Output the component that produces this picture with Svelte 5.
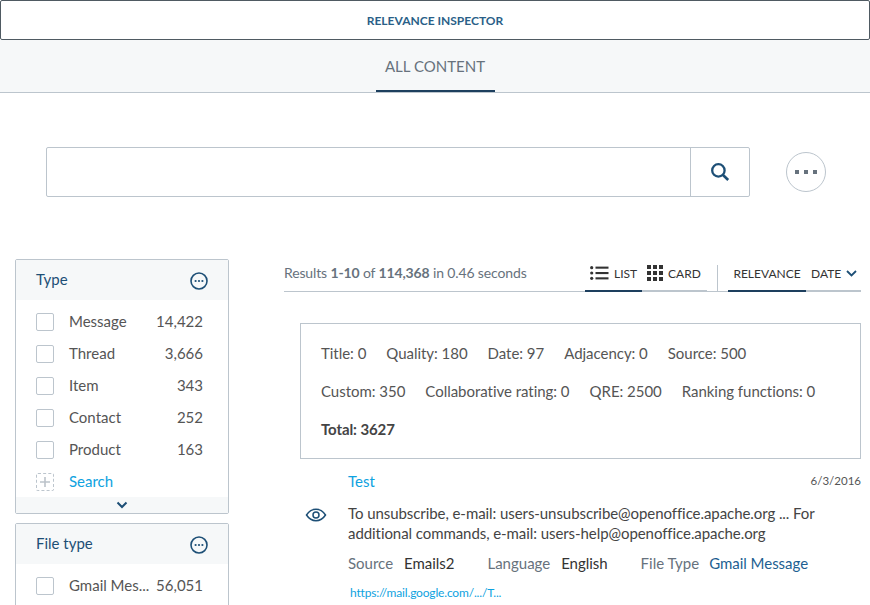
<script>
  const rows = [
    ['Message', '14,422'],
    ['Thread', '3,666'],
    ['Item', '343'],
    ['Contact', '252'],
    ['Product', '163']
  ];
</script>

<svelte:head><title>Relevance Inspector</title></svelte:head>

{#snippet more()}
  <svg class="more" width="18" height="18" viewBox="0 0 18 18" fill="none">
    <circle cx="9" cy="9" r="8" stroke="#1d4f76" stroke-width="1.6" />
    <circle cx="5.6" cy="9" r="1.1" fill="#1d4f76" />
    <circle cx="9" cy="9" r="1.1" fill="#1d4f76" />
    <circle cx="12.4" cy="9" r="1.1" fill="#1d4f76" />
  </svg>
{/snippet}

<div class="page">
  <button class="inspector">RELEVANCE INSPECTOR</button>
  <nav class="tabs"><span class="tab">ALL CONTENT</span></nav>

  <div class="searchrow">
    <div class="searchbox">
      <div class="input"></div>
      <div class="searchbtn">
        <svg width="20" height="20" viewBox="0 0 20 20" fill="none" stroke="#1d4f76">
          <circle cx="8.4" cy="8.4" r="6.2" stroke-width="2.3" />
          <path d="M13 13l5.2 5" stroke-width="2.6" />
        </svg>
      </div>
    </div>
    <div class="circle"><i></i><i></i><i></i></div>
  </div>

  <div class="main">
    <aside>
      <section class="facet first">
        <header><span>Type</span>{@render more()}</header>
        <div class="list">
          {#each rows as [label, count]}
            <div class="row"><span class="box"></span><span class="label">{label}</span><span class="count">{count}</span></div>
          {/each}
          <div class="row">
            <span class="box dashed">
              <svg width="12" height="12" viewBox="0 0 12 12"><path d="M6 1v10M1 6h10" stroke="#bcc3ca" stroke-width="1.6" /></svg>
            </span>
            <span class="label link">Search</span>
          </div>
        </div>
        <div class="expand">
          <svg width="12" height="8" viewBox="0 0 12 8" fill="none"><path d="M1.5 1.5L6 6l4.5-4.5" stroke="#1d4f76" stroke-width="2" /></svg>
        </div>
      </section>
      <section class="facet second">
        <header><span>File type</span>{@render more()}</header>
        <div class="list">
          <div class="row"><span class="box"></span><span class="label">Gmail Mes...</span><span class="count">56,051</span></div>
        </div>
      </section>
    </aside>

    <div class="results">
      <div class="bar">
        <div class="summary">Results <b>1-10</b> of <b>114,368</b> in 0.46 seconds</div>
        <div class="views">
          <div class="vt active">
            <svg width="19" height="14" viewBox="0 0 19 14" fill="#333">
              <circle cx="1.7" cy="1.7" r="1.6" /><circle cx="1.7" cy="7" r="1.6" /><circle cx="1.7" cy="12.3" r="1.6" />
              <rect x="5.5" y="0.6" width="13" height="2.1" /><rect x="5.5" y="6" width="13" height="2.1" /><rect x="5.5" y="11.3" width="13" height="2.1" />
            </svg>
            <span>LIST</span>
          </div>
          <div class="vt">
            <svg width="16" height="16" viewBox="0 0 16 16" fill="#333">
              <rect width="4" height="4" /><rect x="6" width="4" height="4" /><rect x="12" width="4" height="4" />
              <rect y="6" width="4" height="4" /><rect x="6" y="6" width="4" height="4" /><rect x="12" y="6" width="4" height="4" />
              <rect y="12" width="4" height="4" /><rect x="6" y="12" width="4" height="4" /><rect x="12" y="12" width="4" height="4" />
            </svg>
            <span>CARD</span>
          </div>
        </div>
        <div class="sorts">
          <div class="st active">RELEVANCE</div>
          <div class="st date">
            DATE
            <svg width="11" height="7" viewBox="0 0 11 7" fill="none"><path d="M1 1l4.500 4.500L10 1" stroke="#1d4f76" stroke-width="1.8" /></svg>
          </div>
        </div>
      </div>

      <div class="scores">
        <div class="line"><span>Title: 0</span><span>Quality: 180</span><span>Date: 97</span><span>Adjacency: 0</span><span>Source: 500</span></div>
        <div class="line"><span>Custom: 350</span><span>Collaborative rating: 0</span><span>QRE: 2500</span><span>Ranking functions: 0</span></div>
        <div class="line"><b>Total: 3627</b></div>
      </div>

      <article class="result">
        <div class="gutter">
          <svg width="22" height="14" viewBox="0 0 22 14" fill="none" stroke="#1d4f76" stroke-width="1.5">
            <path d="M1.5 7C4 3.2 7.200 1.300 11 1.300S18 3.200 20.500 7C18 10.800 14.800 12.700 11 12.700S4 10.800 1.500 7z" />
            <circle cx="11" cy="7" r="3" />
          </svg>
        </div>
        <div class="content">
          <div class="title"><a href="#top">Test</a><time>6/3/2016</time></div>
          <p>To unsubscribe, e-mail: users-unsubscribe@openoffice.apache.org ... For additional commands, e-mail: users-help@openoffice.apache.org</p>
          <div class="fields">
            <span class="f"><span class="k">Source</span><span class="v">Emails2</span></span>
            <span class="f"><span class="k">Language</span><span class="v">English</span></span>
            <span class="f last"><span class="k">File Type</span><a class="v" href="#top">Gmail Message</a></span>
          </div>
          <a class="url" href="#top">https://mail.google.com/.../T...</a>
        </div>
      </article>
    </div>
  </div>
</div>

<style>
  :global(body) {
    margin: 0;
    background: #fff;
    overflow: hidden;
  }
  .page {
    width: 870px;
    height: 605px;
    overflow: hidden;
    font-family: Lato, "Open Sans", sans-serif;
    font-size: 15px;
    color: #333;
  }
  .inspector {
    display: block;
    width: 100%;
    height: 40px;
    padding: 0;
    background: #fff;
    border: 1px solid #4f5a62;
    border-radius: 2px;
    font: 700 12px Lato, sans-serif;
    color: #2a5f88;
  }
  .tabs {
    height: 52px;
    background: #f6f8f9;
    border-bottom: 1px solid #bcc5cd;
    display: flex;
    justify-content: center;
  }
  .tab {
    width: 119px;
    height: 50px;
    line-height: 53px;
    text-align: center;
    font-size: 15px;
    color: #67727d;
    border-bottom: 2px solid #1d3f5e;
  }
  .searchrow {
    display: flex;
    align-items: center;
    margin: 54px 0 0 46px;
    gap: 36px;
  }
  .searchbox {
    display: flex;
    width: 702px;
    height: 48px;
    border: 1px solid #bcc5cd;
    border-radius: 2px;
  }
  .input {
    flex: 1;
  }
  .searchbtn {
    width: 58px;
    border-left: 1px solid #bcc5cd;
    display: flex;
    align-items: center;
    justify-content: center;
  }
  .circle {
    width: 38px;
    height: 38px;
    border: 1px solid #bcc5cd;
    border-radius: 50%;
    display: flex;
    align-items: center;
    justify-content: center;
    gap: 5px;
  }
  .circle i {
    width: 4px;
    height: 4px;
    background: #67727d;
  }
  .main {
    display: flex;
    margin: 62px 0 0 15px;
    gap: 55px;
  }
  aside {
    width: 214px;
    flex: none;
  }
  .facet {
    border: 1px solid #bcc5cd;
    border-radius: 2px;
    margin-bottom: 9px;
  }
  .facet.second {
    height: 120px;
  }
  .facet header {
    height: 40px;
    background: #f6f8f9;
    display: flex;
    align-items: center;
    justify-content: space-between;
    padding: 0 20px;
    color: #1d4f76;
    font-size: 15px;
  }
  .facet header span {
    margin-top: -2px;
  }
  .facet header .more {
    margin-top: 2px;
  }
  .list {
    padding: 6px 25px 0 20px;
  }
  .row {
    height: 32px;
    display: flex;
    align-items: center;
  }
  .box {
    width: 16px;
    height: 16px;
    border: 1px solid #bcc5cd;
    border-radius: 2px;
    margin-right: 15px;
    flex: none;
    display: flex;
    align-items: center;
    justify-content: center;
  }
  .box.dashed {
    border-style: dashed;
  }
  .label {
    flex: 1;
    color: #555;
    white-space: nowrap;
    margin-top: -2px;
  }
  .link {
    color: #0ea2e0;
  }
  .count {
    color: #555;
    margin-top: -2px;
  }
  .expand {
    height: 16px;
    background: #f6f8f9;
    display: flex;
    align-items: center;
    justify-content: center;
    margin-top: -1px;
  }
  .results {
    width: 577px;
    flex: none;
  }
  .bar {
    display: flex;
    align-items: flex-end;
    height: 33px;
    border-bottom: 1px solid #bcc5cd;
    box-sizing: border-box;
  }
  .summary {
    font-size: 14px;
    letter-spacing: -0.14px;
    color: #67727d;
    width: 301px;
    line-height: 28px;
    align-self: flex-start;
  }
  .views {
    display: flex;
    height: 33px;
    width: 122px;
    border-bottom: 2px solid #bcc5cd;
    margin-bottom: -1px;
    box-sizing: border-box;
  }
  .vt {
    display: flex;
    align-items: center;
    gap: 5px;
    font-size: 12px;
    color: #333;
    padding-bottom: 3px;
    box-sizing: border-box;
    height: 33px;
  }
  .vt:first-child {
    width: 57px;
    padding-left: 5px;
  }
  .vt.active {
    border-bottom: 2px solid #1d3f5e;
  }
  .vt:not(.active) {
    padding-left: 5px;
    padding-bottom: 5px;
  }
  .sorts {
    display: flex;
    height: 33px;
    width: 133px;
    margin-left: 21px;
    margin-bottom: -1px;
    position: relative;
    border-bottom: 2px solid #bcc5cd;
    box-sizing: border-box;
  }
  .sorts::before {
    content: "";
    position: absolute;
    left: -11px;
    top: 6px;
    height: 26px;
    border-left: 1px solid #bcc5cd;
  }
  .st {
    height: 33px;
    box-sizing: border-box;
    font-size: 12px;
    color: #333;
    display: flex;
    align-items: center;
    padding-bottom: 5px;
  }
  .st.active {
    width: 78px;
    justify-content: center;
    border-bottom: 2px solid #1d3f5e;
    padding-bottom: 3px;
  }
  .st.date {
    padding-left: 5px;
    gap: 5px;
  }
  .scores {
    margin: 31px 0 0 16px;
    border: 1px solid #bcc5cd;
    height: 136px;
    box-sizing: border-box;
    padding: 10px 20px;
    color: #555;
    font-size: 15px;
  }
  .line {
    display: flex;
    gap: 20px;
    height: 38px;
    align-items: center;
  }
  .line span {
    letter-spacing: -0.03px;
  }
  .line b {
    color: #444;
    letter-spacing: -0.1px;
  }
  .result {
    display: flex;
    margin-top: 13px;
    margin-left: 21px;
  }
  .gutter {
    width: 43px;
    flex: none;
    padding-top: 35px;
  }
  .content {
    flex: 1;
    min-width: 0;
  }
  .title {
    display: flex;
    justify-content: space-between;
    height: 23px;
    line-height: 18px;
  }
  .title a {
    color: #0ea2e0;
    text-decoration: none;
    font-size: 15px;
  }
  .title time {
    font-size: 11.500px;
    color: #555;
  }
  p {
    margin: 8px 0 0;
    font-size: 15px;
    line-height: 20px;
    letter-spacing: -0.07px;
    width: 480px;
    color: #444;
  }
  .fields {
    display: flex;
    margin-top: 9px;
    gap: 33px;
    line-height: 22px;
  }
  .f {
    display: flex;
    gap: 11px;
  }
  .f.last {
    gap: 10px;
  }
  .k {
    color: #67727d;
  }
  .v {
    color: #333;
    text-decoration: none;
    letter-spacing: -0.03px;
  }
  a.v {
    color: #1d5f92;
  }
  .url {
    display: block;
    margin: 11px 0 0 2px;
    font-size: 12px;
    letter-spacing: -0.17px;
    color: #0ea2e0;
    text-decoration: none;
  }
</style>
